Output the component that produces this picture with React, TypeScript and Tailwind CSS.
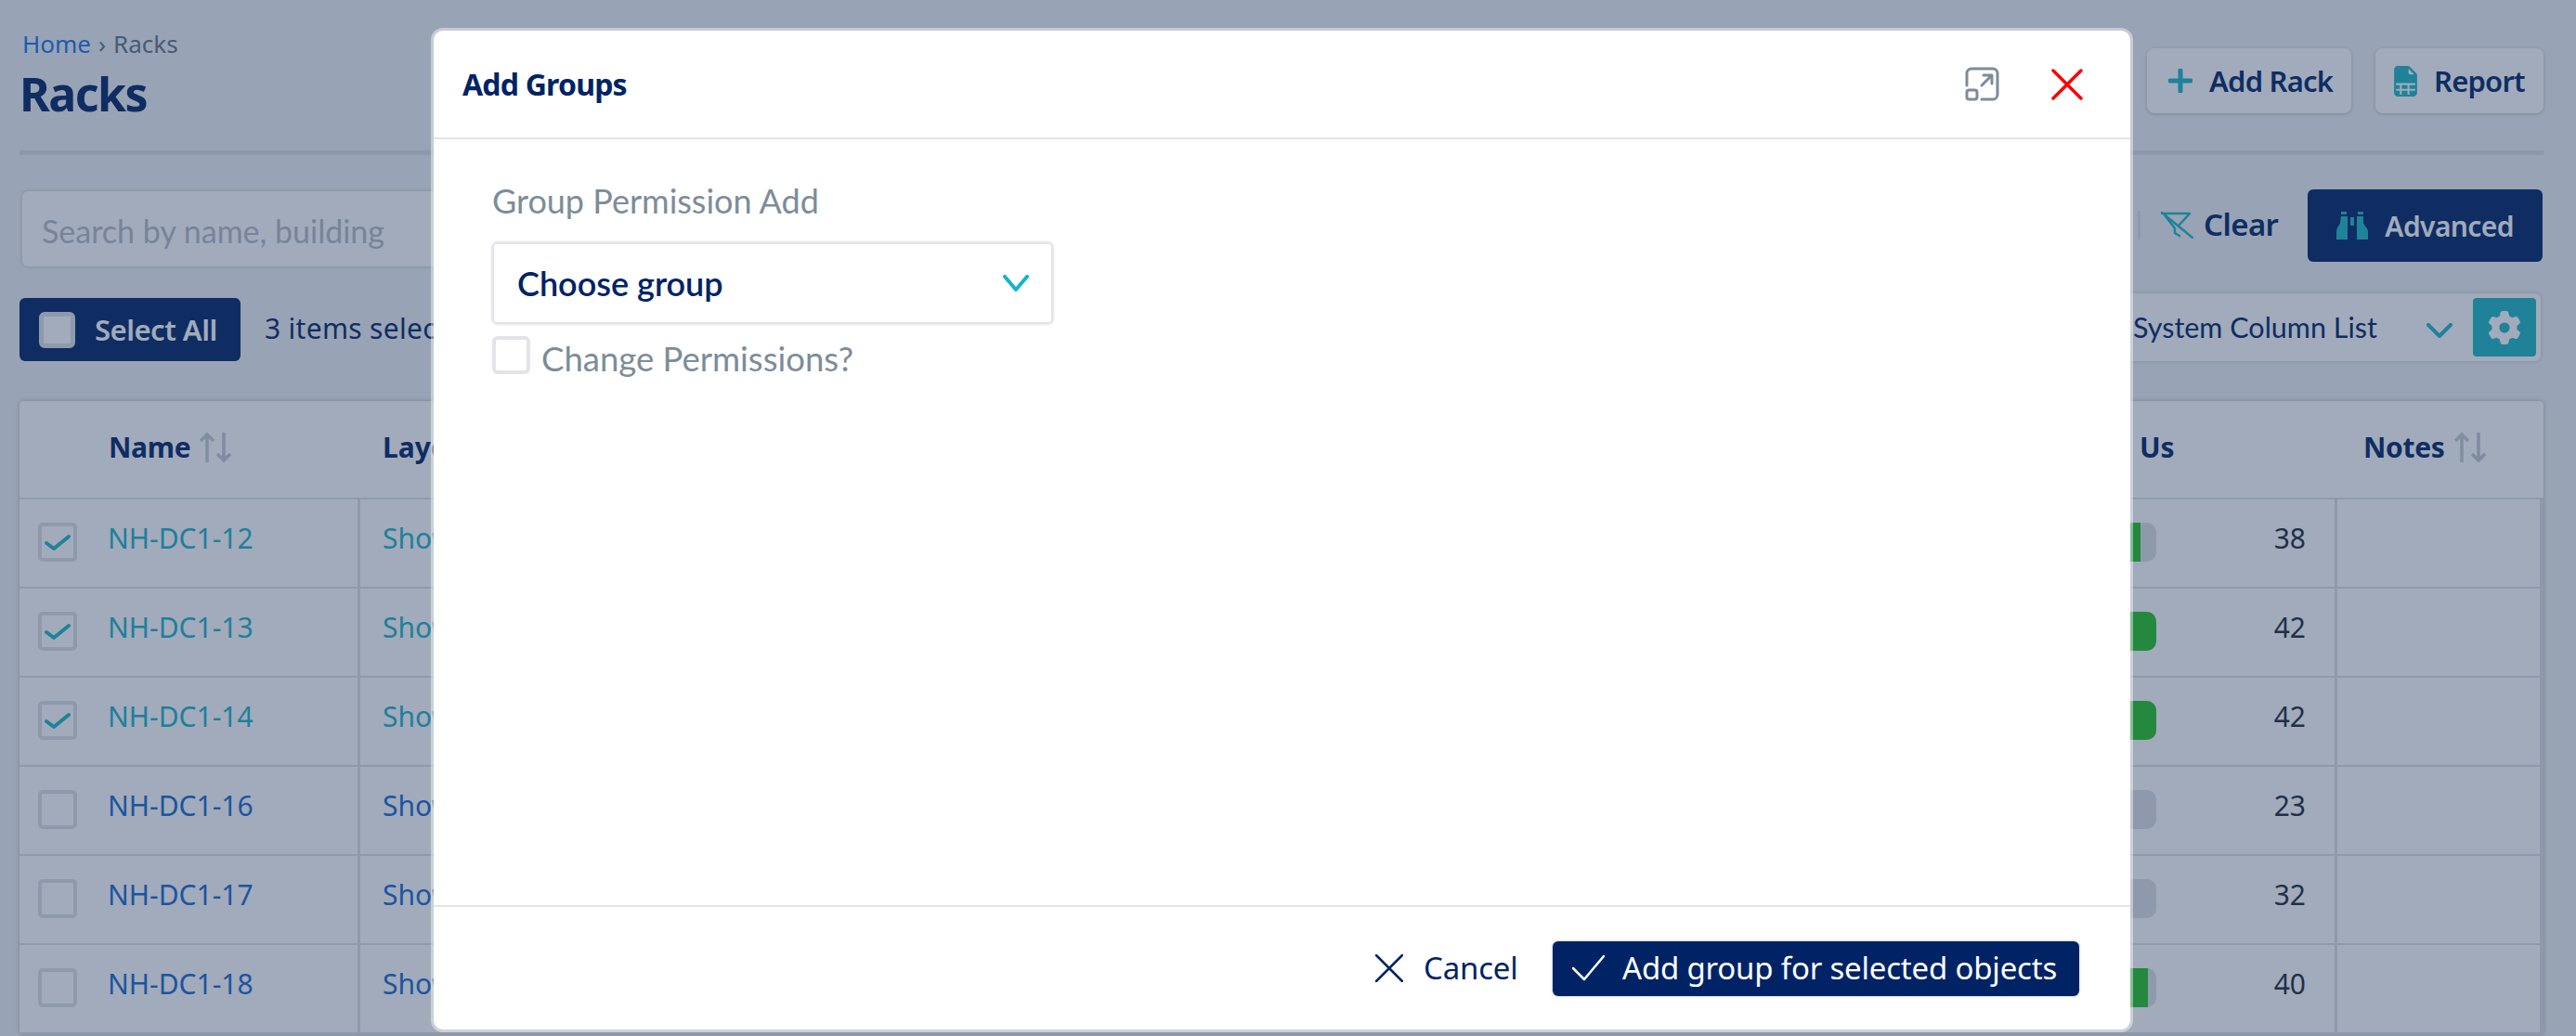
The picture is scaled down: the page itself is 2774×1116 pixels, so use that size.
import React from "react";
import { BsFileEarmarkSpreadsheetFill } from "react-icons/bs";
import { FaGear } from "react-icons/fa6";

const rows = [
  { name: "NH-DC1-12", used: 38, checked: true },
  { name: "NH-DC1-13", used: 42, checked: true },
  { name: "NH-DC1-14", used: 42, checked: true },
  { name: "NH-DC1-16", used: 23, checked: false },
  { name: "NH-DC1-17", used: 32, checked: false },
  { name: "NH-DC1-18", used: 40, checked: false },
];

function SortIcon() {
  return (
    <svg width="38" height="34" viewBox="0 0 38 34" fill="none" stroke="#c6ccd4" strokeWidth="3.5" className="ml-[9px]">
      <path d="M9 33V3M2 10l7-7 7 7" />
      <path d="M27 1v30M20 24l7 7 7-7" stroke="#c2c8d0" />
    </svg>
  );
}

function Check() {
  return (
    <svg width="30" height="20" viewBox="0 0 30 20" fill="none" stroke="#1cb7c4" strokeWidth="4" strokeLinecap="round" strokeLinejoin="round">
      <path d="M3 11l8 6L27 4" />
    </svg>
  );
}

function Row({ name, used, checked }: { name: string; used: number; checked: boolean }) {
  const link = checked ? "text-[#1cb3c8]" : "text-[#1769d0]";
  return (
    <div className="flex h-[96px] border-b-[2px] border-[#dee1e5]">
      <div className="flex w-[367px] shrink-0 items-center border-r-[3px] border-[#dee1e5]">
        <div className="ml-[20px] mt-[-2px] flex h-[42px] w-[42px] items-center justify-center rounded-[5px] border-[4px] border-[#dee1e5]">
          {checked && <Check />}
        </div>
        <span className={`ml-[33px] mt-[-11px] text-[30px] font-['Noto_Sans',sans-serif] ${link}`}>{name}</span>
      </div>
      <div className="flex flex-1 items-center pl-[24px]">
        <span className={`mt-[-11px] text-[30px] font-['Noto_Sans',sans-serif] ${link}`}>Show</span>
      </div>
      <div className="flex w-[375px] shrink-0 items-center border-r-[3px] border-[#dee1e5]">
        <div className="mt-[-2px] h-[42px] w-[180px] overflow-hidden rounded-[10px] bg-[#dee1e5]">
          <div className="h-full bg-[#25c227]" style={{ width: `${(used / 42) * 100}%` }} />
        </div>
        <span className="mt-[-11px] flex-1 pr-[31px] text-right text-[30px] text-[#1f2937] font-['Noto_Sans',sans-serif]">{used}</span>
      </div>
      <div className="w-[222px] shrink-0 border-r-[4px] border-[#dee1e5]" />
    </div>
  );
}

export default function App() {
  return (
    <div className="relative h-[1116px] w-[2774px] overflow-hidden bg-[#f0f2f4] font-['Noto_Sans',sans-serif]">
      <div className="pl-[21px] pr-[35px]">
        <div className="flex h-[162px] items-start justify-between">
          <div>
            <div className="mt-[29px] flex items-center pl-[3px] text-[26px] leading-[36px]">
              <span className="text-[#1a73e8]">Home</span>
              <span className="mx-[8px] text-[#5f7487]">›</span>
              <span className="text-[#5f7487]">Racks</span>
            </div>
            <div className="mt-[5px] text-[50px] font-bold leading-[62px] tracking-[-1.5px] text-[#002366]">Racks</div>
          </div>
          <div className="mt-[52px] flex gap-[26px]">
            <div className="flex h-[70px] w-[220px] items-center gap-[18px] rounded-[8px] bg-white pl-[23px] shadow-[0_1px_4px_rgba(0,0,0,0.2)]">
              <svg width="26" height="26" viewBox="0 0 26 26" stroke="#1cb7c4" strokeWidth="5" strokeLinecap="round"><path d="M13 2v22M2 13h22" /></svg>
              <span className="text-[31px] font-semibold tracking-[-0.8px] text-[#002366]">Add Rack</span>
            </div>
            <div className="flex h-[70px] w-[181px] items-center gap-[14px] rounded-[8px] bg-white pl-[16px] shadow-[0_1px_4px_rgba(0,0,0,0.2)]">
              <BsFileEarmarkSpreadsheetFill className="text-[#1cb7c4]" size={33} />
              <span className="text-[31px] font-semibold tracking-[-0.8px] text-[#002366]">Report</span>
            </div>
          </div>
        </div>
        <div className="h-[5px] bg-[#dde0e5]" />

        <div className="mt-[39px] flex h-[81px] items-start pl-[3px]">
          <div className="flex h-[81px] w-[2200px] items-center rounded-[6px] bg-white pl-[21px] pt-[3px] font-['Lato',sans-serif] text-[34px] text-[#b5bcc7] shadow-[0_0_4px_rgba(0,0,0,0.2)]">
            Search by name, building
          </div>
          <div className="ml-[78px] mt-[21px] h-[31px] w-[3px] bg-[#dee1e5]" />
          <svg width="35" height="29" viewBox="0 0 35 29" fill="none" stroke="#1cb7c4" strokeWidth="2.5" strokeLinecap="round" strokeLinejoin="round" className="ml-[22px] mt-[22px]">
            <path d="M1 1l33 27M1 2h30L20 14M5 5l10 13v5l5 3" />
          </svg>
          <span className="ml-[11px] mt-[13px] text-[33px] font-semibold leading-[46px] tracking-[-0.6px] text-[#002366]">Clear</span>
          <div className="ml-[32px] mt-[-2px] flex h-[78px] w-[253px] items-center gap-[18px] rounded-[6px] bg-[#002366] pl-[31px]">
            <svg width="34" height="30" viewBox="0 0 34 30" fill="#1cb7c4">
              <path d="M5 0h6v3H5zM5 5h7v25H0v-9c0-3 3-6 4-9z" />
              <path d="M23 0h6v3h-6zM22 5h7v7c1 3 5 6 5 9v9H22z" />
              <path d="M15 6h4v9h-4z" />
            </svg>
            <span className="text-[30px] font-semibold tracking-[-0.6px] text-white">Advanced</span>
          </div>
        </div>

        <div className="mt-[29px] flex h-[73px] items-end">
          <div className="flex h-[68px] w-[238px] items-center rounded-[6px] bg-[#002366]">
            <div className="ml-[21px] h-[39px] w-[39px] rounded-[6px] border-[5px] border-[#dee1e5] bg-white" />
            <span className="ml-[21px] text-[31px] font-semibold tracking-[-0.5px] text-white">Select All</span>
          </div>
          <span className="mb-[13px] ml-[26px] text-[30px] tracking-[0.3px] text-[#002366]">3 items selected</span>
          <div className="ml-auto mr-[3px] flex h-[73px] w-[480px] items-center rounded-[6px] bg-white pl-[41px] shadow-[0_0_4px_rgba(0,0,0,0.2)]">
            <span className="w-[267px] whitespace-nowrap font-['Lato',sans-serif] text-[30.5px] text-[#002366]">System Column List</span>
            <svg width="28" height="16" viewBox="0 0 28 16" fill="none" stroke="#1cb7c4" strokeWidth="4" strokeLinecap="round" strokeLinejoin="round" className="ml-[49px] mt-[7px]">
              <path d="M2 2l12 12L26 2" />
            </svg>
            <div className="ml-[22px] flex h-[63px] w-[68px] items-center justify-center rounded-[4px] bg-[#1cb7c4]">
              <FaGear className="text-white" size={36} />
            </div>
          </div>
        </div>

        <div className="mt-[43px] rounded-t-[4px] bg-white shadow-[0_0_5px_rgba(0,0,0,0.25)]">
          <div className="flex h-[106px] items-center border-b-[2px] border-[#dee1e5] pb-[5px] text-[30px] font-bold text-[#002366]">
            <div className="flex w-[367px] shrink-0 items-center pl-[96px]">
              <span className="tracking-[-0.3px]">Name</span>
              <SortIcon />
            </div>
            <div className="flex-1 pl-[24px]">Layout</div>
            <div className="w-[241px] shrink-0 tracking-[-0.3px]">Us</div>
            <div className="flex w-[194px] shrink-0 items-center">
              <span className="tracking-[-0.3px]">Notes</span>
              <SortIcon />
            </div>
          </div>
          {rows.map((r) => (
            <Row key={r.name} {...r} />
          ))}
        </div>
      </div>

      <div className="absolute inset-0 bg-[rgba(35,58,95,0.427)]" />

      <div className="absolute left-[467px] top-[33px] flex h-[1076px] w-[1827px] flex-col rounded-[10px] bg-white shadow-[0_0_0_3px_rgba(255,255,255,0.45)]">
        <div className="flex h-[117px] shrink-0 items-center border-b-[2px] border-[#e1e4e8] pl-[31px]">
          <span className="text-[32px] font-bold tracking-[-0.8px] text-[#002366]">Add Groups</span>
          <svg width="37" height="37" viewBox="0 0 37 37" fill="none" stroke="#7d8c99" strokeWidth="3" strokeLinecap="round" strokeLinejoin="round" className="ml-auto">
            <path d="M2 20V7a5 5 0 0 1 5-5h23a5 5 0 0 1 5 5v23a5 5 0 0 1-5 5H18" />
            <rect x="2" y="25" width="11" height="10" rx="2.5" />
            <path d="M18 20l10-10M20 9h9v9" />
          </svg>
          <svg width="34" height="34" viewBox="0 0 34 34" fill="none" stroke="#ff0000" strokeWidth="3.5" strokeLinecap="round" className="ml-[56px] mr-[51px]">
            <path d="M2 2l30 30M32 2L2 32" />
          </svg>
        </div>
        <div className="flex-1 pl-[63px]">
          <div className="mt-[43px] font-['Lato',sans-serif] text-[36px] leading-[46px] text-[#7d8c99]">Group Permission Add</div>
          <div className="mt-[22px] flex h-[88px] w-[604px] items-center justify-between rounded-[5px] border-[2px] border-[#e1e4e8] pl-[25px] pr-[24px] shadow-[0_0_3px_rgba(0,0,0,0.2)]">
            <span className="font-['Lato',sans-serif] text-[36px] font-semibold text-[#002366]">Choose group</span>
            <svg width="28" height="18" viewBox="0 0 28 18" fill="none" stroke="#12b5cb" strokeWidth="4" strokeLinecap="round" strokeLinejoin="round">
              <path d="M2 2l12 14L26 2" />
            </svg>
          </div>
          <div className="mt-[13px] flex items-start">
            <div className="h-[41px] w-[41px] rounded-[6px] border-[4px] border-[#e1e4e8]" />
            <span className="ml-[12px] mt-[2px] font-['Lato',sans-serif] text-[36.5px] leading-[44px] text-[#7d8c99]">Change Permissions?</span>
          </div>
        </div>
        <div className="flex h-[134px] shrink-0 items-center justify-end border-t-[2px] border-[#e1e4e8] pr-[55px]">
          <svg width="30" height="30" viewBox="0 0 30 30" fill="none" stroke="#002366" strokeWidth="2.5" strokeLinecap="round">
            <path d="M1 1l28 28M29 1L1 29" />
          </svg>
          <span className="ml-[22px] w-[100px] text-[33px] tracking-[-0.2px] text-[#002366]">Cancel</span>
          <div className="ml-[39px] flex h-[59px] w-[567px] items-center rounded-[6px] bg-[#002366] pl-[21px] shadow-[0_0_3px_rgba(0,0,0,0.3)]">
            <svg width="35" height="28" viewBox="0 0 35 28" fill="none" stroke="#ffffff" strokeWidth="2.5" strokeLinecap="round" strokeLinejoin="round">
              <path d="M1 14l12 12L34 1" />
            </svg>
            <span className="ml-[19px] text-[33px] tracking-[-0.2px] text-white">Add group for selected objects</span>
          </div>
        </div>
      </div>
    </div>
  );
}
